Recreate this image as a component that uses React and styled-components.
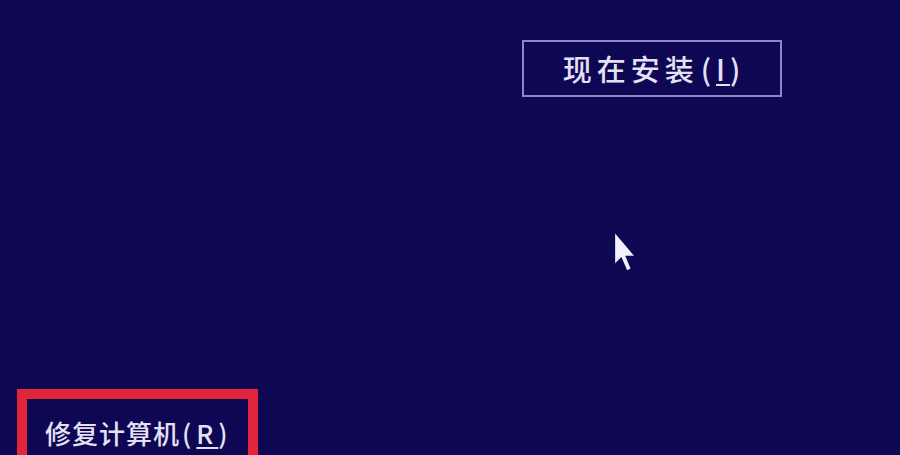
import React from 'react';
import styled, { createGlobalStyle } from 'styled-components';

const GlobalStyle = createGlobalStyle`
  html, body {
    margin: 0;
    padding: 0;
    background: #0e0753;
  }
`;

function App() {
  return (
    <>
      <GlobalStyle />
      <Screen>
        <TopRow>
          <SetupButton type="button">
            现在安装<Paren>(<u>I</u>)</Paren>
          </SetupButton>
        </TopRow>
        <BottomRow>
          <Highlight>
            <RepairLink>
              修复计算机<Paren>(<u>R</u>)</Paren>
            </RepairLink>
          </Highlight>
        </BottomRow>
        <Pointer viewBox="0 0 21 36" aria-hidden="true">
          <path d="M1 1 L1 27 L6.5 21.5 L11.5 33 L14.5 31.5 L9.8 20.5 L17.5 20.5 Z" fill="#f2f0fa" />
        </Pointer>
      </Screen>
    </>
  );
}

export default App;

const cjkFont = `"Noto Sans CJK SC", "Noto Sans", sans-serif`;

const Screen = styled.div`
  position: relative;
  display: flex;
  flex-direction: column;
  width: 900px;
  height: 455px;
  overflow: hidden;
  background: #0e0753;
  font-family: ${cjkFont};
  color: #e4e1f4;
`;

const TopRow = styled.div`
  display: flex;
  justify-content: flex-end;
  padding: 40px 118px 0 0;
`;

const SetupButton = styled.button`
  display: flex;
  align-items: center;
  justify-content: center;
  width: 260px;
  height: 57px;
  padding: 0 0 2px 4px;
  background: transparent;
  border: 2px solid #8d87c6;
  color: #e4e1f4;
  font-family: ${cjkFont};
  font-size: 29px;
  font-weight: 500;
  letter-spacing: 5px;
  cursor: default;
`;

const Paren = styled.span`
  letter-spacing: 5px;
  padding-left: 2px;
  & u {
    text-decoration-thickness: 2px;
    text-underline-offset: 3px;
  }
`;

const BottomRow = styled.div`
  display: flex;
  margin-top: auto;
  padding-left: 17px;
`;

const Highlight = styled.div`
  width: 241px;
  height: 66px;
  box-sizing: border-box;
  border: 10px solid #e2253b;
  border-bottom: none;
  padding: 21px 0 0 18px;
`;

const RepairLink = styled.div`
  font-size: 26px;
  font-weight: 500;
  letter-spacing: 1px;
  white-space: nowrap;
  line-height: 1;
`;

const Pointer = styled.svg`
  position: absolute;
  left: 614px;
  top: 231px;
  width: 24px;
  height: 44px;
`;
